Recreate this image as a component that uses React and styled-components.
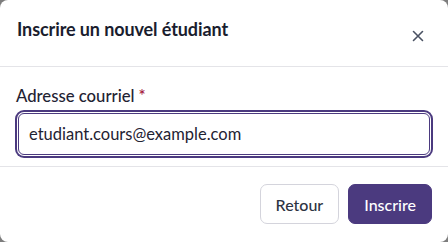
import React from "react";
import styled, { createGlobalStyle } from "styled-components";

const Global = createGlobalStyle`
  html, body { margin: 0; padding: 0; background: #7d7d7d; }
  body { font-family: Lato, "Noto Sans", sans-serif; -webkit-font-smoothing: antialiased; }
  * { box-sizing: border-box; }
`;

const Dialog = styled.div`
  width: 448px;
  height: 242px;
  background: #ffffff;
  border-radius: 8px;
  display: flex;
  flex-direction: column;
  overflow: hidden;
`;

const Header = styled.div`
  height: 67px;
  padding: 17px 17px 0 17px;
  display: flex;
  justify-content: space-between;
  align-items: flex-start;
  border-bottom: 1px solid #e4e4e8;
`;

const Title = styled.h2`
  margin: 0;
  font-size: 18px;
  line-height: 24px;
  font-weight: 700;
  letter-spacing: -0.1px;
  color: #1a1d2e;
`;

const Close = styled.button`
  width: 24px;
  height: 24px;
  margin-top: 7px;
  margin-right: 1px;
  padding: 0;
  border: none;
  background: transparent;
  display: flex;
  align-items: center;
  justify-content: center;
  color: #4a5263;
`;

const Body = styled.div`
  padding: 19px 15px 11px 15px;
  border-bottom: 1px solid #e4e4e8;
  display: flex;
  flex-direction: column;
`;

const Label = styled.label`
  font-size: 16.7px;
  line-height: 20px;
  font-weight: 500;
  color: #1f2333;
  padding-left: 1px;
  margin-bottom: 7px;
`;

const Required = styled.span`
  color: #a3123a;
  margin-left: 4px;
`;

const Input = styled.input`
  margin: 0 3px;
  height: 42px;
  border: 1px solid #4b3a7f;
  border-radius: 6px;
  box-shadow: 0 0 0 1px #ffffff, 0 0 0 3px #4b3a7f;
  padding: 0 10px;
  font-family: inherit;
  font-size: 16.5px;
  color: #1f2333;
  outline: none;
  background: #fff;
`;

const Footer = styled.div`
  flex: 1;
  display: flex;
  justify-content: flex-end;
  align-items: center;
  gap: 9px;
  padding: 0 16px 1px 0;
`;

const Button = styled.button`
  height: 40px;
  padding: 0 15px;
  border-radius: 7px;
  font-family: inherit;
  font-size: 16px;
  font-weight: 500;
  border: 1px solid ${(p) => (p.$primary ? "#4b3a7f" : "#d4d4dc")};
  background: ${(p) => (p.$primary ? "#4b3a7f" : "#ffffff")};
  color: ${(p) => (p.$primary ? "#ffffff" : "#2d3343")};
`;

export default function App() {
  return (
    <>
      <Global />
      <Dialog>
        <Header>
          <Title>Inscrire un nouvel étudiant</Title>
          <Close aria-label="Fermer">
            <svg width="12" height="12" viewBox="0 0 12 12" fill="none" stroke="currentColor" strokeWidth="1.6" strokeLinecap="round">
              <path d="M1.5 1.5 L10.5 10.5 M10.5 1.5 L1.5 10.5" />
            </svg>
          </Close>
        </Header>
        <Body>
          <Label>
            Adresse courriel<Required>*</Required>
          </Label>
          <Input defaultValue="etudiant.cours@example.com" />
        </Body>
        <Footer>
          <Button>Retour</Button>
          <Button $primary>Inscrire</Button>
        </Footer>
      </Dialog>
    </>
  );
}
